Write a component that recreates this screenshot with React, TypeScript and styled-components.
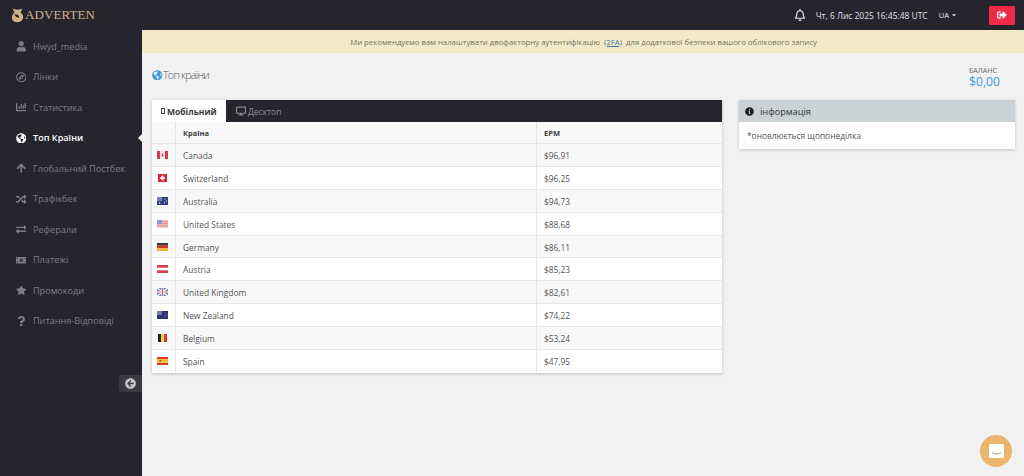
import styled, { createGlobalStyle } from 'styled-components';
import { ReactNode } from 'react';
import {
  FaUser, FaRegCompass, FaChartBar, FaGlobeAmericas, FaArrowUp, FaRandom, FaExchangeAlt,
  FaMoneyBillAlt, FaStar, FaQuestion, FaRegBell, FaSignOutAlt, FaInfoCircle, FaDesktop,
  FaArrowCircleLeft, FaCaretDown,
} from 'react-icons/fa';

const GlobalStyle = createGlobalStyle`
  html, body { margin: 0; padding: 0; height: 100%; overflow: hidden; }
  body { font-family: "Open Sans", "Liberation Sans", sans-serif; background: #f1f1f1; }
  * { box-sizing: border-box; }
`;

const Page = styled.div`
  width: 1024px;
  height: 476px;
  display: flex;
  flex-direction: column;
  position: relative;
  overflow: hidden;
`;

const TopBar = styled.header`
  height: 30px;
  flex: none;
  background: #26252e;
  display: flex;
  align-items: center;
  padding: 0 9px 0 11px;
  color: #e8e8ea;
`;

const Logo = styled.div`
  display: flex;
  align-items: center;
  gap: 1px;
  font-family: "Liberation Serif", serif;
  font-size: 13px;
  letter-spacing: 0.1px;
  color: #c9b48e;
`;

const TopRight = styled.div`
  margin-left: auto;
  display: flex;
  align-items: center;
`;

const Clock = styled.span`
  font-size: 8.45px;
  margin-left: 10px;
  color: #e4e4e6;
`;

const Lang = styled.span`
  font-size: 7.6px;
  margin-left: 11px;
  display: flex;
  align-items: center;
  gap: 2px;
  color: #e4e4e6;
`;

const LogoutButton = styled.button`
  width: 26px;
  height: 19px;
  margin-left: 32px;
  border: 0;
  border-radius: 1px;
  background: #ee2b47;
  color: #fff;
  display: flex;
  align-items: center;
  justify-content: center;
  padding: 0;
  font-size: 10px;
`;

const Body = styled.div`
  flex: 1;
  display: flex;
  min-height: 0;
`;

const Sidebar = styled.nav`
  width: 142px;
  flex: none;
  background: #26252e;
  padding-top: 1px;
  position: relative;
`;

const NavItem = styled.div<{ $active?: boolean }>`
  height: 30.5px;
  display: flex;
  align-items: center;
  padding-left: 15px;
  font-size: 9.1px;
  font-weight: ${(p) => (p.$active ? 600 : 400)};
  color: ${(p) => (p.$active ? '#ffffff' : '#7d7c88')};
  position: relative;
  ${(p) =>
    p.$active &&
    `&::after {
      content: '';
      position: absolute;
      right: 0;
      top: 50%;
      margin-top: -4px;
      border-style: solid;
      border-width: 4px 4px 4px 0;
      border-color: transparent #f1f1f1 transparent transparent;
    }`}
`;

const NavIcon = styled.span`
  width: 12px;
  margin-right: 6px;
  display: flex;
  justify-content: center;
  font-size: 10.5px;
`;

const CollapseButton = styled.div`
  position: absolute;
  right: 0;
  top: 345px;
  width: 23px;
  height: 17px;
  background: #3b3a43;
  border-radius: 3px 0 0 3px;
  color: #c8c8cc;
  display: flex;
  align-items: center;
  justify-content: center;
  font-size: 11px;
`;

const Main = styled.main`
  flex: 1;
  min-width: 0;
  display: flex;
  flex-direction: column;
`;

const Notice = styled.div`
  height: 23px;
  flex: none;
  background: #f3e9c6;
  display: flex;
  align-items: center;
  justify-content: center;
  font-size: 7.77px;
  color: #77715f;
  white-space: pre;
  padding-left: 1px;
`;

const NoticeLink = styled.span`
  color: #3a7ea8;
  text-decoration: underline;
`;

const Content = styled.div`
  flex: 1;
  padding: 0 9px 0 10px;
`;

const HeadRow = styled.div`
  height: 47px;
  display: flex;
  justify-content: space-between;
  align-items: flex-start;
  padding-right: 15px;
`;

const PageTitle = styled.h1`
  margin: 14px 0 0;
  font-size: 10.8px;
  font-weight: 300;
  letter-spacing: -0.8px;
  color: #555;
  display: flex;
  align-items: center;
  gap: 0.5px;
  line-height: 16px;
`;

const TitleIcon = styled.span`
  color: #3d9bdc;
  font-size: 10.5px;
  display: flex;
`;

const Balance = styled.div`
  margin-top: 13px;
  display: flex;
  flex-direction: column;
`;

const BalanceLabel = styled.span`
  font-size: 7.1px;
  line-height: 9px;
  color: #666;
`;

const BalanceValue = styled.span`
  font-size: 12.2px;
  line-height: 14px;
  color: #3d9bdc;
`;

const Columns = styled.div`
  display: flex;
  gap: 17px;
  align-items: flex-start;
`;

const TablePanel = styled.section`
  width: 570px;
  flex: none;
  box-shadow: 0 1px 3px rgba(0, 0, 0, 0.22);
  background: #fff;
`;

const Tabs = styled.div`
  height: 22px;
  background: #26252e;
  display: flex;
`;

const Tab = styled.div<{ $active?: boolean }>`
  width: 74px;
  display: flex;
  align-items: center;
  padding-left: ${(p) => (p.$active ? '9px' : '10px')};
  gap: 2px;
  font-size: 8.5px;
  font-weight: ${(p) => (p.$active ? 700 : 400)};
  color: ${(p) => (p.$active ? '#3a3a3a' : '#8b8a94')};
  background: ${(p) => (p.$active ? '#fff' : 'transparent')};
`;

const MissingGlyph = styled.span`
  width: 4px;
  height: 6px;
  border: 1px solid #444;
`;

const TabIcon = styled.span`
  display: flex;
  font-size: 10px;
`;

const Row = styled.div<{ $shaded?: boolean; $head?: boolean }>`
  height: ${(p) => (p.$head ? '22px' : '22.9px')};
  display: grid;
  grid-template-columns: 23px 361px 1fr;
  background: ${(p) => (p.$shaded ? '#f8f8f8' : '#fff')};
  border-bottom: 1px solid #e7e7e7;
  font-size: ${(p) => (p.$head ? '7.5px' : '8.4px')};
  font-weight: ${(p) => (p.$head ? 700 : 400)};
  color: ${(p) => (p.$head ? '#3c3c3c' : '#555')};
  &:last-child { border-bottom: 0; }
`;

const Cell = styled.div`
  display: flex;
  align-items: center;
  padding: 1px 0 0 7px;
  border-left: 1px solid #e7e7e7;
  &:first-child { border-left: 0; padding: 0 0 0 5px; }
`;

const FlagSvg = styled.svg`
  width: 11px;
  height: 8px;
  display: block;
`;

const InfoPanel = styled.aside`
  width: 276px;
  flex: none;
  background: #fff;
  box-shadow: 0 1px 3px rgba(0, 0, 0, 0.2);
`;

const InfoHead = styled.div`
  height: 22px;
  background: #cbd2d6;
  display: flex;
  align-items: center;
  padding-left: 6px;
  gap: 6px;
  font-size: 9.2px;
  color: #333;
`;

const InfoIcon = styled.span`
  display: flex;
  font-size: 9px;
  color: #1c1c1c;
`;

const InfoBody = styled.div`
  height: 27px;
  display: flex;
  align-items: center;
  padding-left: 8px;
  font-size: 8.4px;
  color: #555;
`;

const ChatBubble = styled.div`
  position: absolute;
  right: 12px;
  bottom: 9px;
  width: 32px;
  height: 32px;
  border-radius: 50%;
  background: #eab56c;
  display: flex;
  align-items: center;
  justify-content: center;
`;

const flagArt: Record<string, ReactNode> = {
  ca: (
    <>
      <rect width="11" height="8" fill="#f6dfe0" />
      <rect width="3" height="8" fill="#c8404c" />
      <rect x="8" width="3" height="8" fill="#c8404c" />
      <path d="M5.500 1.800 6.500 4.600 5.500 5.800 4.500 4.600z" fill="#c8404c" />
    </>
  ),
  ch: (
    <>
      <rect x="1" width="9" height="8" fill="#d62839" />
      <rect x="4.600" y="1.600" width="1.800" height="4.800" fill="#fff" />
      <rect x="3.100" y="3.100" width="4.800" height="1.800" fill="#fff" />
    </>
  ),
  au: (
    <>
      <rect width="11" height="8" fill="#2f3d85" />
      <rect width="5" height="4" fill="#7c80aa" />
      <circle cx="8" cy="2" r=".6" fill="#fff" />
      <circle cx="9.300" cy="4" r=".6" fill="#fff" />
      <circle cx="7.600" cy="5.800" r=".6" fill="#fff" />
      <circle cx="2.600" cy="6" r=".8" fill="#fff" />
    </>
  ),
  us: (
    <>
      <rect width="11" height="8" fill="#f1c8cb" />
      <rect y="1" width="11" height="1" fill="#e2848a" />
      <rect y="3.200" width="11" height="1" fill="#e2848a" />
      <rect y="5.400" width="11" height="1" fill="#e2848a" />
      <rect width="5" height="4.200" fill="#8f9bd0" />
    </>
  ),
  de: (
    <>
      <rect width="11" height="2.700" fill="#3a3a3a" />
      <rect y="2.700" width="11" height="2.700" fill="#d2332b" />
      <rect y="5.400" width="11" height="2.600" fill="#f2b632" />
    </>
  ),
  at: (
    <>
      <rect width="11" height="8" fill="#d8404c" />
      <rect y="2.700" width="11" height="2.600" fill="#fff" />
    </>
  ),
  gb: (
    <>
      <rect width="11" height="8" fill="#7579ab" />
      <path d="M0 0 11 8M11 0 0 8" stroke="#fff" strokeWidth="1.400" />
      <path d="M5.500 0V8M0 4H11" stroke="#fff" strokeWidth="2.200" />
      <path d="M5.500 0V8M0 4H11" stroke="#d4737f" strokeWidth="1.100" />
    </>
  ),
  nz: (
    <>
      <rect width="11" height="8" fill="#2a3577" />
      <rect width="5" height="4" fill="#787ba6" />
      <circle cx="8" cy="2" r=".6" fill="#e57" />
      <circle cx="9.300" cy="3.800" r=".6" fill="#e57" />
      <circle cx="7.800" cy="5.800" r=".6" fill="#e57" />
    </>
  ),
  be: (
    <>
      <rect x="1" width="3" height="8" fill="#222" />
      <rect x="4" width="3" height="8" fill="#f5d33c" />
      <rect x="7" width="3" height="8" fill="#dc3a35" />
    </>
  ),
  es: (
    <>
      <rect width="11" height="8" fill="#d9372c" />
      <rect y="2" width="11" height="4" fill="#f6c530" />
      <rect x="2.400" y="3" width="1.800" height="2" fill="#c3602f" />
    </>
  ),
};

const Flag = ({ code }: { code: string }) => <FlagSvg viewBox="0 0 11 8">{flagArt[code]}</FlagSvg>;

const navItems = [
  { label: 'Hwyd_media', icon: <FaUser /> },
  { label: 'Лінки', icon: <FaRegCompass /> },
  { label: 'Статистика', icon: <FaChartBar /> },
  { label: 'Топ Країни', icon: <FaGlobeAmericas />, active: true },
  { label: 'Глобальний Постбек', icon: <FaArrowUp /> },
  { label: 'Трафікбек', icon: <FaRandom /> },
  { label: 'Реферали', icon: <FaExchangeAlt /> },
  { label: 'Платежі', icon: <FaMoneyBillAlt /> },
  { label: 'Промокоди', icon: <FaStar /> },
  { label: 'Питання-Відповіді', icon: <FaQuestion /> },
];

const countries = [
  { code: 'ca', name: 'Canada', epm: '$96,91' },
  { code: 'ch', name: 'Switzerland', epm: '$96,25' },
  { code: 'au', name: 'Australia', epm: '$94,73' },
  { code: 'us', name: 'United States', epm: '$88,68' },
  { code: 'de', name: 'Germany', epm: '$86,11' },
  { code: 'at', name: 'Austria', epm: '$85,23' },
  { code: 'gb', name: 'United Kingdom', epm: '$82,61' },
  { code: 'nz', name: 'New Zealand', epm: '$74,22' },
  { code: 'be', name: 'Belgium', epm: '$53,24' },
  { code: 'es', name: 'Spain', epm: '$47,95' },
];

function App() {
  return (
    <Page>
      <GlobalStyle />
      <TopBar>
        <Logo>
          <svg width="13" height="15" viewBox="0 0 13 15">
            <path d="M1.500 0.500C4 2 8.500 2 11.500 0.500L9.500 4.500C12 6 13 9 11.500 11.500 9.500 15 3.500 15 1.500 12 0 9 1.500 6 3.500 4.500z" fill="#cfb487" />
            <path d="M3.500 6.500C6 5.500 8.500 7.500 8 10 6 9.500 4.500 9 3.500 6.500z" fill="#26252e" />
          </svg>
          ADVERTEN
        </Logo>
        <TopRight>
          <FaRegBell size={12} />
          <Clock>Чт, 6 Лис 2025 16:45:48 UTC</Clock>
          <Lang>UA <FaCaretDown size={6} /></Lang>
          <LogoutButton><FaSignOutAlt /></LogoutButton>
        </TopRight>
      </TopBar>
      <Body>
        <Sidebar>
          {navItems.map((item) => (
            <NavItem key={item.label} $active={item.active}>
              <NavIcon>{item.icon}</NavIcon>
              {item.label}
            </NavItem>
          ))}
          <CollapseButton><FaArrowCircleLeft /></CollapseButton>
        </Sidebar>
        <Main>
          <Notice>
            {'Ми рекомендуємо вам налаштувати двофакторну аутентифікацію  '}
            <NoticeLink>(2FA)</NoticeLink>
            {'  для додаткової безпеки вашого облікового запису'}
          </Notice>
          <Content>
            <HeadRow>
              <PageTitle>
                <TitleIcon><FaGlobeAmericas /></TitleIcon>
                Топ країни
              </PageTitle>
              <Balance>
                <BalanceLabel>БАЛАНС</BalanceLabel>
                <BalanceValue>$0,00</BalanceValue>
              </Balance>
            </HeadRow>
            <Columns>
              <TablePanel>
                <Tabs>
                  <Tab $active><MissingGlyph />Мобільний</Tab>
                  <Tab><TabIcon><FaDesktop /></TabIcon>Десктоп</Tab>
                </Tabs>
                <Row $head $shaded>
                  <Cell />
                  <Cell>Країна</Cell>
                  <Cell>EPM</Cell>
                </Row>
                {countries.map((c, i) => (
                  <Row key={c.code} $shaded={i % 2 === 0}>
                    <Cell><Flag code={c.code} /></Cell>
                    <Cell>{c.name}</Cell>
                    <Cell>{c.epm}</Cell>
                  </Row>
                ))}
              </TablePanel>
              <InfoPanel>
                <InfoHead>
                  <InfoIcon><FaInfoCircle /></InfoIcon>
                  інформація
                </InfoHead>
                <InfoBody>*оновлюється щопонеділка</InfoBody>
              </InfoPanel>
            </Columns>
          </Content>
        </Main>
      </Body>
      <ChatBubble>
        <svg width="15" height="14" viewBox="0 0 15 14">
          <path d="M1.500 0H13.500A1.500 1.500 0 0 1 15 1.500V12.500A1.500 1.500 0 0 1 13.500 14H1.500A1.500 1.500 0 0 1 0 12.500V1.500A1.500 1.500 0 0 1 1.500 0Z" fill="#fff" />
          <path d="M3 8.500C5 10.500 10 10.500 12 8.500" fill="none" stroke="#b9a68c" strokeWidth="1" />
        </svg>
      </ChatBubble>
    </Page>
  );
}

export default App;
